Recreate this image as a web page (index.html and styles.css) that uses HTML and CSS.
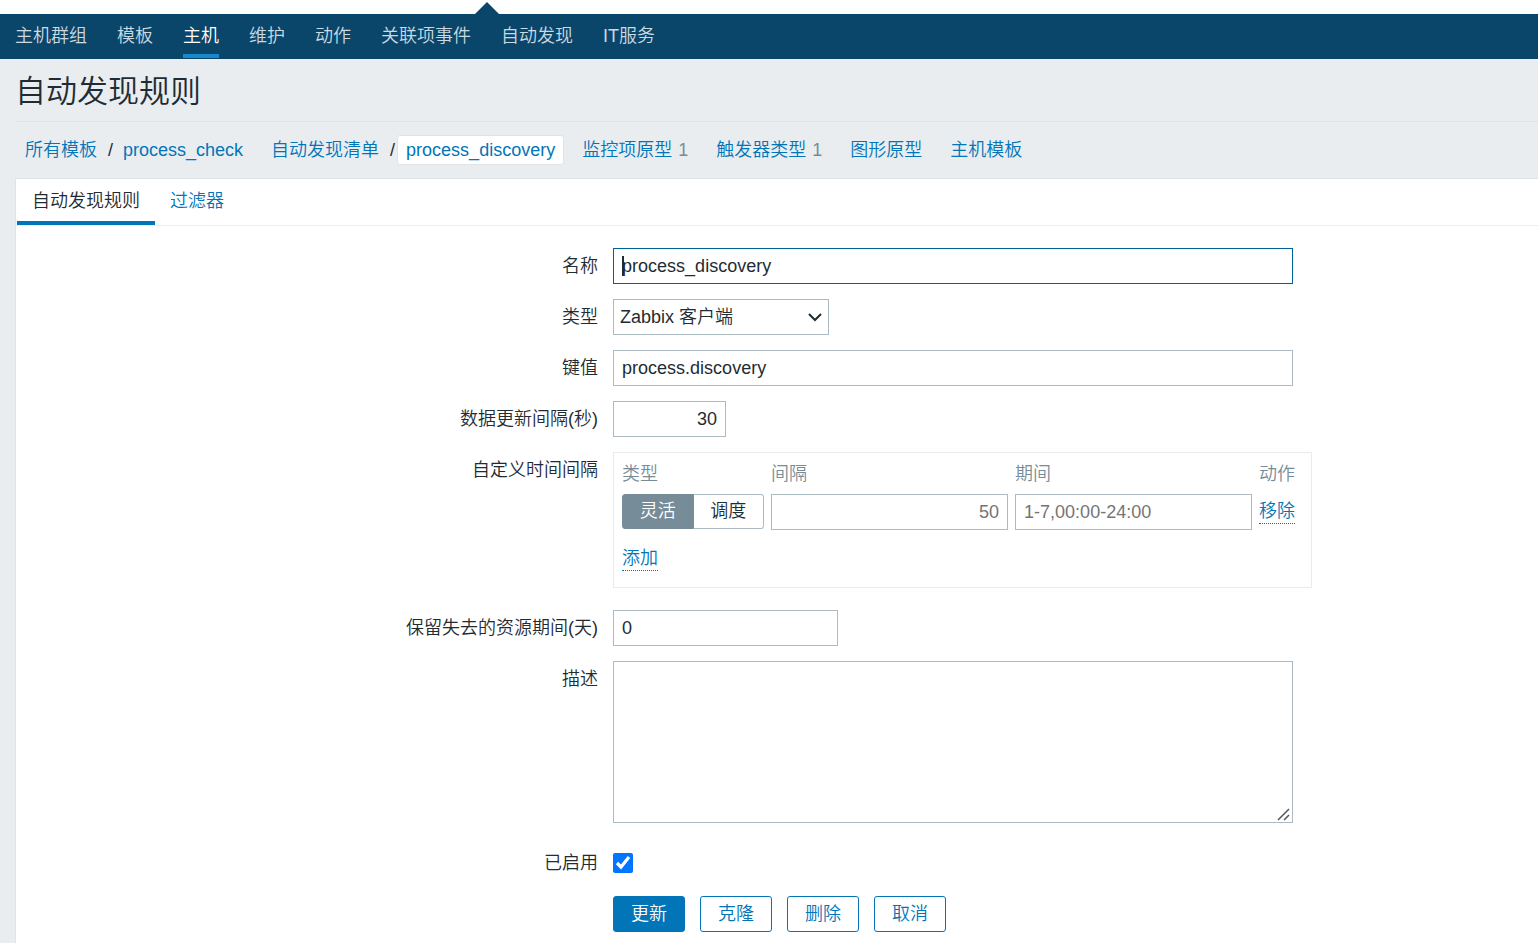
FILE: index.html
```html
<!DOCTYPE html>
<html lang="zh-CN">
<head>
    <meta charset="utf-8">
    <meta name="viewport" content="width=device-width, initial-scale=1">
    <title>自动发现规则</title>
    <link rel="stylesheet" href="styles.css">
</head>
<body>
  <header class="top">
    <div class="top-bar"><span class="top-arrow"></span></div>
    <nav class="nav">
      <a href="#">主机群组</a>
      <a href="#">模板</a>
      <a href="#" class="selected">主机</a>
      <a href="#">维护</a>
      <a href="#">动作</a>
      <a href="#">关联项事件</a>
      <a href="#">自动发现</a>
      <a href="#">IT服务</a>
    </nav>
  </header>

  <main class="page">
    <h1>自动发现规则</h1>

    <ul class="crumbs">
      <li><a href="#">所有模板</a><span class="slash">/</span><a href="#">process_check</a></li>
      <li><a href="#">自动发现清单</a><span class="slash slash-last">/</span><a href="#" class="current">process_discovery</a></li>
      <li><a href="#">监控项原型</a> <sup>1</sup></li>
      <li><a href="#">触发器类型</a> <sup>1</sup></li>
      <li><a href="#">图形原型</a></li>
      <li><a href="#">主机模板</a></li>
    </ul>

    <div class="card">
      <div class="tabs">
        <a href="#" class="active">自动发现规则</a>
        <a href="#">过滤器</a>
      </div>

      <form class="form">
        <label for="name">名称</label>
        <div class="field with-caret">
          <input type="text" id="name" class="text wide focused" value="process_discovery">
          <span class="caret"></span>
        </div>

        <label for="type">类型</label>
        <div class="field">
          <div class="select">
            <select id="type">
              <option>Zabbix 客户端</option>
            </select>
            <svg class="chevron" width="14" height="9" viewBox="0 0 14 9"><path d="M1 1l6 6 6-6" fill="none" stroke="#1f2c33" stroke-width="2"/></svg>
          </div>
        </div>

        <label for="key">键值</label>
        <div class="field"><input type="text" id="key" class="text wide" value="process.discovery"></div>

        <label for="delay">数据更新间隔(秒)</label>
        <div class="field"><input type="text" id="delay" class="text short right" value="30"></div>

        <span class="label">自定义时间间隔</span>
        <div class="field spaced">
          <div class="intervals">
            <table>
              <thead>
                <tr><th>类型</th><th>间隔</th><th>期间</th><th>动作</th></tr>
              </thead>
              <tbody>
                <tr class="interval">
                  <td>
                    <div class="switch">
                      <input type="radio" name="kind" id="flexible" checked><label for="flexible">灵活</label>
                      <input type="radio" name="kind" id="scheduling"><label for="scheduling">调度</label>
                    </div>
                  </td>
                  <td><input type="text" class="text medium right" placeholder="50" aria-label="间隔"></td>
                  <td><input type="text" class="text medium" placeholder="1-7,00:00-24:00" aria-label="期间"></td>
                  <td><button type="button" class="link">移除</button></td>
                </tr>
                <tr class="add">
                  <td colspan="4"><button type="button" class="link">添加</button></td>
                </tr>
              </tbody>
            </table>
          </div>
        </div>

        <label for="lifetime">保留失去的资源期间(天)</label>
        <div class="field"><input type="text" id="lifetime" class="text days" value="0"></div>

        <label for="description">描述</label>
        <div class="field spaced">
          <div class="area">
            <textarea id="description"></textarea>
            <svg class="grip" width="13" height="13" viewBox="0 0 13 13"><path d="M1 12L12 1M7 12l5-5" fill="none" stroke="#555" stroke-width="1.5"/></svg>
          </div>
        </div>

        <label for="enabled">已启用</label>
        <div class="field check"><input type="checkbox" id="enabled" checked></div>

        <div class="buttons">
          <button type="submit" class="btn primary">更新</button>
          <button type="button" class="btn">克隆</button>
          <button type="button" class="btn">删除</button>
          <button type="button" class="btn">取消</button>
        </div>
      </form>
    </div>
  </main>
</body>
</html>
```

FILE: styles.css
```css
* {
    box-sizing: border-box;
}

body {
    margin: 0;
    background-color: #e9edf0;
    color: #1f2c33;
    font-family: "Liberation Sans", "Noto Sans CJK SC", sans-serif;
    font-size: 18px;
    font-weight: 350;
    line-height: 24px;
}

input, select, textarea, button {
    font: inherit;
    color: inherit;
}

a {
    color: #0275b8;
    text-decoration: none;
}

/* navigation */
.top-bar {
    height: 14px;
    background-color: #fff;
    position: relative;
}

.top-arrow {
    position: absolute;
    left: 475px;
    bottom: 0;
    border: 12px solid transparent;
    border-top: 0;
    border-bottom-color: #0a466a;
}

.nav {
    display: flex;
    gap: 30px;
    height: 45px;
    padding: 10px 15px 0;
    background-color: #0a466a;
}

.nav a {
    height: 34px;
    color: #cbd9e1;
    white-space: nowrap;
}

.nav .selected {
    color: #fff;
    border-bottom: 4px solid #1888cc;
}

/* heading */
.page {
    padding-left: 15px;
}

h1 {
    margin: 0;
    padding: 13px 0 9px;
    border-bottom: 1px solid #dfe4e7;
    font-size: 31px;
    font-weight: 350;
    line-height: 40px;
}

.crumbs {
    display: flex;
    align-items: center;
    gap: 28px;
    margin: 0;
    padding: 13px 10px;
    list-style: none;
    white-space: nowrap;
}

.crumbs li {
    line-height: 30px;
}

.crumbs li:nth-child(2) {
    margin-right: -10px;
}

.slash {
    margin: 0 10px 0 11px;
}

.slash-last {
    margin-right: 2px;
}

.current {
    display: inline-block;
    padding: 0 8px;
    background-color: #fff;
    border: 1px solid #dfe4e7;
    border-radius: 3px;
    line-height: 28px;
}

sup {
    margin-left: 1px;
    color: #768d99;
    font-size: 18px;
    line-height: 1;
    vertical-align: baseline;
}

/* card */
.card {
    background-color: #fff;
    border: 1px solid #dfe4e7;
    border-right: 0;
    border-bottom: 0;
}

.tabs {
    display: flex;
    height: 47px;
    padding-left: 1px;
    border-bottom: 1px solid #ebeef0;
}

.tabs a {
    padding: 10px 15px 0;
}

.tabs .active {
    color: #1f2c33;
    border-bottom: 4px solid #0275b8;
}

/* form */
.form {
    display: grid;
    grid-template-columns: 38% 1fr;
    gap: 15px;
    padding: 22px 0 11px 6px;
}

.form > label, .label {
    padding-top: 6px;
    text-align: right;
}

.field {
    display: flex;
}

.spaced {
    padding-bottom: 7px;
}

.text {
    display: block;
    height: 36px;
    padding: 0 8px;
    border: 1px solid #acbbc2;
    background-color: #fff;
    outline: 0;
}

.text::placeholder {
    color: #757575;
}

.wide {
    width: 680px;
}

.medium {
    width: 237px;
}

.days {
    width: 225px;
}

.short {
    width: 113px;
}

.right {
    text-align: right;
}

.focused {
    border-color: #006298;
    caret-color: transparent;
}

.with-caret {
    position: relative;
}

.caret {
    position: absolute;
    left: 9px;
    top: 8px;
    width: 2px;
    height: 20px;
    background-color: #1f2c33;
}

.select {
    position: relative;
    width: 216px;
}

.select select {
    display: block;
    width: 100%;
    height: 36px;
    padding: 0 30px 0 6px;
    border: 1px solid #acbbc2;
    border-radius: 0;
    background-color: #fff;
    appearance: none;
}

.chevron {
    position: absolute;
    right: 7px;
    top: 14px;
    pointer-events: none;
}

.intervals {
    width: 699px;
    padding: 0 8px;
    border: 1px solid #ebebeb;
}

table {
    border-collapse: collapse;
}

th, td {
    padding: 0 7px 0 0;
    text-align: left;
    white-space: nowrap;
}

th {
    height: 41px;
    color: #768d99;
    font-weight: 350;
}

.interval td {
    vertical-align: top;
}

.interval .link {
    margin-top: 5px;
}

.add td {
    height: 57px;
}

.switch {
    display: flex;
    width: 142px;
}

.switch input {
    position: absolute;
    opacity: 0;
}

.switch label {
    flex: 1;
    height: 35px;
    border: 1px solid #acbbc2;
    border-left: 0;
    border-radius: 0 3px 3px 0;
    line-height: 33px;
    text-align: center;
}

.switch label:first-of-type {
    border-left: 1px solid #acbbc2;
    border-radius: 3px 0 0 3px;
}

.switch input:checked + label {
    background-color: #768d99;
    border-color: #768d99;
    color: #fff;
}

.link {
    display: block;
    padding: 0;
    border: 0;
    border-bottom: 1px dotted #0275b8;
    background: none;
    color: #0275b8;
    line-height: 24px;
}

.area {
    position: relative;
    width: 680px;
}

textarea {
    display: block;
    width: 100%;
    height: 162px;
    padding: 6px 8px;
    border: 1px solid #acbbc2;
    resize: none;
}

.grip {
    position: absolute;
    right: 3px;
    bottom: 2px;
}

.check {
    align-items: center;
    height: 36px;
}

.check input {
    width: 20px;
    height: 20px;
    margin: 0;
}

.buttons {
    display: flex;
    grid-column: 2;
    gap: 15px;
}

.btn {
    height: 36px;
    padding: 0 17px;
    border: 1px solid #0275b8;
    border-radius: 3px;
    background-color: #fff;
    color: #0275b8;
}

.primary {
    background-color: #0275b8;
    color: #fff;
}
```
